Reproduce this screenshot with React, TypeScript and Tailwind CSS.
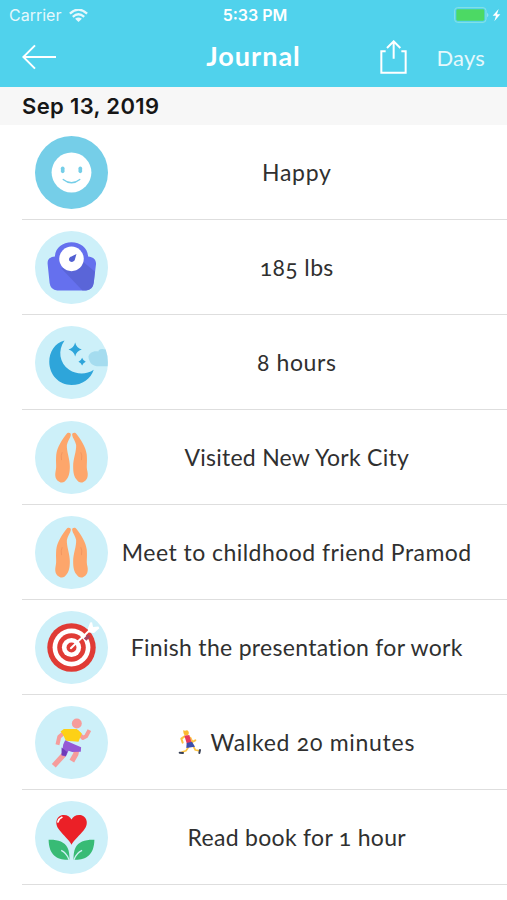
import type { ReactNode } from 'react'

type Entry = {
  id: number
  text: string
  tracking: string
  disc: string
  icon: ReactNode
  runner?: boolean
}

function SmileIcon() {
  return (
    <>
      <circle cx="153" cy="126" r="60" fill="#fff" />
      <rect x="121" y="108" width="11" height="20" rx="5.5" fill="#75cee8" />
      <rect x="174" y="108" width="11" height="20" rx="5.5" fill="#75cee8" />
      <path d="M128 147q25 20 50 0" fill="none" stroke="#75cee8" strokeWidth="4" strokeLinecap="round" />
    </>
  )
}

function ScaleIcon() {
  return (
    <>
      <path d="M103 93C104 67 126 50 153 50s49 17 50 43c14 1 24 8 24 22l-7 58q-3 22-23 22h-87q-20 0-23-22l-6-58c-1-14 8-21 22-22z" fill="#6570ee" />
      <path d="M122 128l64 67h11q20 0 23-22l4-34-41-34z" fill="#545ec9" opacity=".6" />
      <circle cx="153" cy="100" r="37" fill="#fff" />
      <path d="M168 85l-5 18c-3 8-14 8-17 2-2-7 2-11 7-12z" fill="#5260d2" />
    </>
  )
}

function MoonIcon() {
  return (
    <>
      <path d="M256 87c-13-4-22-1-22 6-16-3-28 5-30 16 2 16 9 26 25 28h33q2-28-6-50z" fill="#a5dcef" />
      <path d="M132 60C102 67 86 96 86 124c0 40 30 70 67 70 33 0 58-19 67-46-22 15-51 15-74 0-30-20-35-59-14-88z" fill="#2ea5da" />
      <path d="M164 66q4 17 20 21-16 4-20 21-4-17-20-21 16-4 20-21zM185 112q3 9 11 12-8 3-11 11-3-8-11-11 8-3 11-12z" fill="#2ea5da" />
    </>
  )
}

function Hand() {
  return (
    <>
      <path d="M138 55C141 49 152 50 151 58C150 67 141 76 139 88C138 108 148 130 148 152C148 172 145 182 139 191C132 202 124 204 116 199C106 194 102 183 105 168C109 152 105 145 107 118C109 95 126 70 138 55z" fill="#fda66b" />
      <path d="M125 110q-5 10-2 24" fill="none" stroke="#f29661" strokeWidth="3" />
    </>
  )
}

function HandsIcon() {
  return (
    <>
      <Hand />
      <g transform="translate(306 0) scale(-1 1)">
        <Hand />
      </g>
    </>
  )
}

function TargetIcon() {
  return (
    <>
      <circle cx="153" cy="126" r="73" fill="#e03b35" />
      <circle cx="153" cy="126" r="57" fill="#fff" />
      <circle cx="153" cy="126" r="43" fill="#e03b35" />
      <circle cx="153" cy="126" r="29" fill="#fff" />
      <circle cx="153" cy="126" r="15" fill="#e03b35" />
      <path d="M190 99l12-12 8 6-12 13z" fill="#a84460" />
      <path d="M151 128l59-56" stroke="#fff" strokeWidth="6" strokeLinecap="round" />
      <path d="M202 70l7-19 6-1 3 14 16-1 3 5-16 14-15-1z" fill="#fff" />
    </>
  )
}

function RunIcon() {
  return (
    <>
      <circle cx="169" cy="69" r="15" fill="#f69c9b" />
      <g fill="none" stroke="#f69c9b" strokeLinecap="square" strokeLinejoin="round">
        <path d="M129 98l-13 11-4 18" strokeWidth="12" />
        <path d="M172 96l15 16 10-5 7-13" strokeWidth="12" />
        <path d="M125 168l-20 22M169 146l-3 15-8 14" strokeWidth="16" />
      </g>
      <path d="M130 85l39 0 15 14-10 25-38-3-9-20-7-8z" fill="#fdd116" />
      <path d="M134 119l20 9 28 12-1 14-26 1-11-4-8 17-13-3 5-33z" fill="#9459d5" />
      <path d="M123 141l17 14-4 12-13-3z" fill="#6e3bb8" />
    </>
  )
}

function HeartIcon() {
  return (
    <>
      <path d="M153 148c-6-14-25-29-36-44-19-23-7-46 13-46 11 0 19 6 23 14 4-8 12-14 23-14 20 0 33 23 14 46-12 15-30 30-37 44z" fill="#eb2027" />
      <path d="M112 79q3-10 12-14" stroke="#fff" strokeWidth="5" strokeLinecap="round" fill="none" />
      <path d="M84 133c26-1 48 5 57 24 5 10 6 22 6 36-34 2-62-10-63-60zM222 133c-26-1-48 5-57 24-5 10-6 22-6 36 34 2 62-10 63-60z" fill="#38bb75" />
      <path d="M146 194q-8-22-24-29M160 194q8-22 25-29" fill="none" stroke="#cdeff5" strokeWidth="4" />
    </>
  )
}

function RunnerGlyph() {
  return (
    <svg viewBox="0 0 72 78" className="h-[26px] w-6 shrink-0">
      <g fill="none" strokeLinecap="round" strokeLinejoin="round">
        <path d="M20 22L10 29l4 12M37 26l6 13 9-5" stroke="#fcc343" strokeWidth="6" />
        <path d="M31 55L24 65 12 69M46 52l6 11 10 2" stroke="#fcc343" strokeWidth="5" />
        <path d="M5 71l10 1M66 63l-2 9" stroke="#384055" strokeWidth="6" />
      </g>
      <path d="M16 3q3 4 11 1 7 3 5 11-3 8-11 4-6-4-5-16z" fill="#fbb931" />
      <path d="M19 20l15-2 7 24-14 4z" fill="#e7395c" />
      <path d="M26 42l16-4 9 15-11 2-15 2z" fill="#3c4fab" />
    </svg>
  )
}

const entries: Entry[] = [
  { id: 1, text: 'Happy', tracking: 'tracking-[0.7px]', disc: '#75cee8', icon: <SmileIcon /> },
  { id: 2, text: '185 lbs', tracking: 'tracking-[0.35px]', disc: '#cdf0f9', icon: <ScaleIcon /> },
  { id: 3, text: '8 hours', tracking: 'tracking-[0.6px]', disc: '#cdf0f9', icon: <MoonIcon /> },
  { id: 4, text: 'Visited New York City', tracking: 'tracking-[0.25px]', disc: '#cdf0f9', icon: <HandsIcon /> },
  { id: 5, text: 'Meet to childhood friend Pramod', tracking: 'tracking-[0.46px]', disc: '#cdf0f9', icon: <HandsIcon /> },
  { id: 6, text: 'Finish the presentation for work', tracking: 'tracking-[0.3px]', disc: '#cdf0f9', icon: <TargetIcon /> },
  { id: 7, text: 'Walked 20 minutes', tracking: 'tracking-[0.72px]', disc: '#cdf0f9', icon: <RunIcon />, runner: true },
  { id: 8, text: 'Read book for 1 hour', tracking: 'tracking-[0.3px]', disc: '#cdf0f9', icon: <HeartIcon /> },
]

function StatusBar() {
  return (
    <div className="grid h-[30px] grid-cols-3 items-center pl-[9px] pr-[6px] font-[Inter,sans-serif] text-[16px] leading-none text-white">
      <div className="flex items-center gap-2 opacity-85">
        <span>Carrier</span>
        <svg viewBox="0 0 57 40" className="h-[13px] w-[19px]" fill="none" stroke="#fff" strokeWidth="7">
          <path d="M2 14q26-24 53 0M11 24q17-16 35 0" />
          <path d="M18 30q10-8 21 0l-10.500 10z" fill="#fff" stroke="none" />
        </svg>
      </div>
      <div className="text-center font-semibold whitespace-nowrap">5:33 PM</div>
      <div className="flex justify-end">
        <svg viewBox="0 0 141 48" className="h-4 w-[47px]">
          <rect x="2" y="2" width="94" height="44" rx="9" fill="none" stroke="#8be2e6" strokeWidth="3" />
          <rect x="7" y="7" width="84" height="34" rx="4" fill="#4cd964" />
          <path d="M100 17q6 7 0 14z" fill="#a8e8f5" />
          <path d="M134 6l-18 20h10l-5 17 18-21h-10z" fill="#fff" />
        </svg>
      </div>
    </div>
  )
}

function NavBar() {
  return (
    <div className="grid h-[53px] grid-cols-3 items-center px-[22px] font-[Lato,sans-serif] text-white">
      <svg viewBox="0 0 102 78" className="h-[26px] w-[34px]" fill="none" stroke="#fff" strokeWidth="6">
        <path d="M102 39H4M39 4L4 39l35 35" />
      </svg>
      <h1 className="pb-[2px] text-center text-[27px] leading-none font-bold tracking-[1px]">Journal</h1>
      <div className="flex items-center justify-end gap-[29px]">
        <svg viewBox="0 0 81 102" className="h-[34px] w-[27px]" fill="none" stroke="#fff" strokeWidth="6">
          <path d="M17 34H4v64h73V34H64M41 56V4M21 24L41 4l20 20" />
        </svg>
        <span className="pt-[2px] text-[22px] leading-none tracking-[0.2px] opacity-85">Days</span>
      </div>
    </div>
  )
}

export default function App() {
  return (
    <div className="h-[900px] w-[507px] overflow-hidden bg-white">
      <header className="h-[87px] bg-[#50d2ec]">
        <StatusBar />
        <NavBar />
      </header>

      <h2 className="flex h-[38px] items-center bg-[#f7f7f7] pt-px pl-[22px] font-[Inter,sans-serif] text-[22px] font-semibold tracking-[0.35px] text-[#161616]">
        Sep 13, 2019
      </h2>

      <ul className="ml-[22px]">
        {entries.map((entry) => (
          <li key={entry.id} className="flex h-[95px] items-center border-b border-[#dedede] pr-[21px] pl-[12.5px]">
            <svg viewBox="43 16 220 220" className="size-[73px] shrink-0">
              <circle cx="153" cy="126" r="110" fill={entry.disc} />
              {entry.icon}
            </svg>
            <div className="flex flex-1 items-center justify-center gap-2 font-[Lato,sans-serif] text-[23px] leading-none whitespace-nowrap text-[#303030] oldstyle-nums">
              {entry.runner && <RunnerGlyph />}
              <span className={entry.tracking}>{entry.text}</span>
            </div>
          </li>
        ))}
      </ul>
    </div>
  )
}
